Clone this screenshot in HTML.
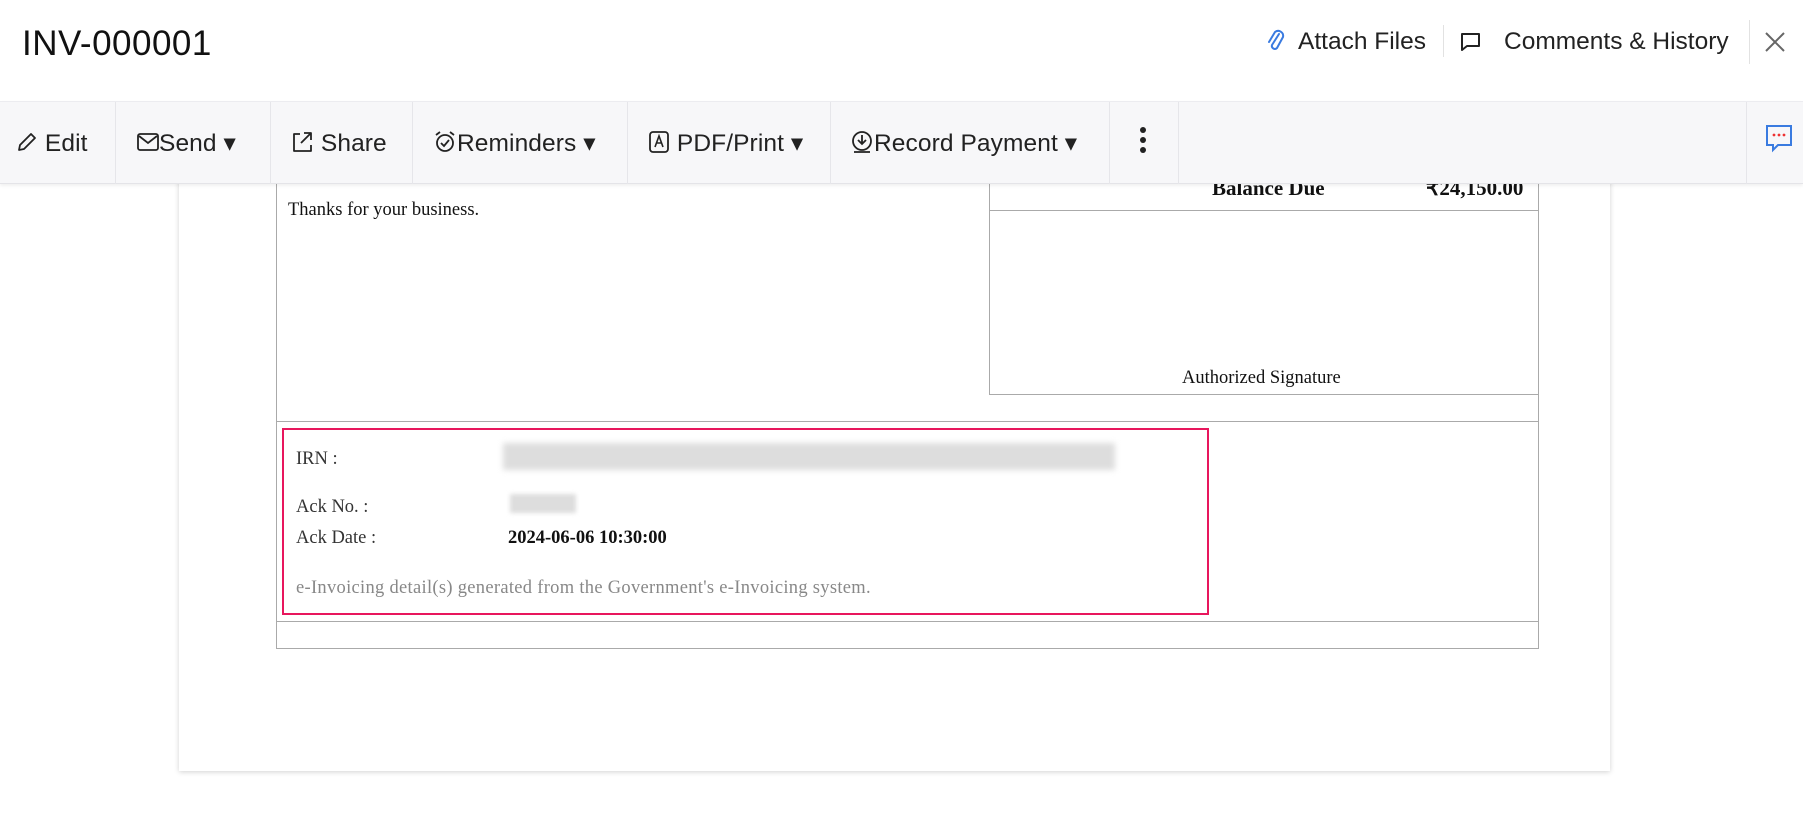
<!DOCTYPE html>
<html><head><meta charset="utf-8"><style>
*{margin:0;padding:0;box-sizing:border-box}
body{width:1803px;height:826px;background:#fff;position:relative;overflow:hidden;font-family:"Liberation Sans",sans-serif;color:#222}
.abs{position:absolute}
.tb{position:absolute;top:101px;left:0;width:1803px;height:83px;background:#f7f7f9;border-top:1px solid #ececf0;border-bottom:1px solid #e4e4e8;box-shadow:0 2px 3px rgba(0,0,0,.06);z-index:5}
.tb .sep{position:absolute;top:0;width:1px;height:82px;background:#e6e6ea}
.tb .it{position:absolute;top:1px;height:82px;line-height:82px;font-size:24.5px;color:#222;white-space:nowrap;letter-spacing:.1px}
.tb svg{vertical-align:middle;margin-top:-6px}
.serif{font-family:"Liberation Serif",serif;font-size:18.5px}
</style></head><body>
<div class="abs" style="left:22px;top:24px;font-size:35px;color:#111;letter-spacing:.5px">INV-000001</div>
<svg class="abs" style="left:1266px;top:28px" width="20" height="26" viewBox="0 0 20 26"><path d="M13 6 L6 17 a3 3 0 0 0 5 3 L17 9 a5 5 0 0 0 -8 -5 L3 14" fill="none" stroke="#3a7be0" stroke-width="2" stroke-linecap="round"/></svg>
<div class="abs" style="left:1298px;top:28px;font-size:24.5px;color:#222">Attach Files</div>
<div class="abs" style="left:1443px;top:25px;width:1px;height:32px;background:#e2e2e2"></div>
<svg class="abs" style="left:1459px;top:30px" width="24" height="24" viewBox="0 0 24 24"><path d="M3 4h17v12H8l-5 4z" fill="none" stroke="#222" stroke-width="2" stroke-linejoin="round"/></svg>
<div class="abs" style="left:1504px;top:28px;font-size:24.5px;color:#222">Comments &amp; History</div>
<div class="abs" style="left:1749px;top:20px;width:1px;height:44px;background:#e2e2e2"></div>
<svg class="abs" style="left:1764px;top:31px" width="22" height="22" viewBox="0 0 22 22"><path d="M2 2L20 20M20 2L2 20" stroke="#666" stroke-width="2"/></svg>

<div class="tb">
<div class="it" style="left:16px"><svg width="22" height="22" viewBox="0 0 22 22"><path d="M3 19l1-5L15 3l4 4L8 18z" fill="none" stroke="#222" stroke-width="1.8" stroke-linejoin="round"/></svg> Edit</div>
<div class="sep" style="left:115px"></div>
<div class="it" style="left:137px"><svg width="22" height="20" viewBox="0 0 22 20"><rect x="1" y="2" width="20" height="16" rx="2" fill="none" stroke="#222" stroke-width="1.8"/><path d="M2 4l9 7 9-7" fill="none" stroke="#222" stroke-width="1.8"/></svg>Send ▾</div>
<div class="sep" style="left:270px"></div>
<div class="it" style="left:290px"><svg width="24" height="24" viewBox="0 0 24 24"><path d="M10 4H4v17h17v-6M14 3h7v7M21 3l-10 10" fill="none" stroke="#222" stroke-width="1.8" stroke-linejoin="round"/></svg> Share</div>
<div class="sep" style="left:412px"></div>
<div class="it" style="left:433px"><svg width="24" height="24" viewBox="0 0 24 24"><circle cx="12" cy="13" r="8" fill="none" stroke="#222" stroke-width="1.8"/><path d="M8 13l3 3 5-6M3 5l4-3M21 5l-4-3" fill="none" stroke="#222" stroke-width="1.8"/></svg>Reminders ▾</div>
<div class="sep" style="left:627px"></div>
<div class="it" style="left:648px"><svg width="22" height="24" viewBox="0 0 22 24"><rect x="2" y="2" width="18" height="20" rx="3" fill="none" stroke="#222" stroke-width="1.8"/><path d="M7 17l4-11 4 11M8.5 13h5" fill="none" stroke="#222" stroke-width="1.6"/></svg> PDF/Print ▾</div>
<div class="sep" style="left:830px"></div>
<div class="it" style="left:850px"><svg width="24" height="24" viewBox="0 0 24 24"><circle cx="12" cy="11" r="9" fill="none" stroke="#222" stroke-width="1.8"/><path d="M12 5v9M8 10l4 4 4-4M4 22h16" fill="none" stroke="#222" stroke-width="1.8"/></svg>Record Payment ▾</div>
<div class="sep" style="left:1109px"></div>
<svg class="abs" style="left:1139px;top:30px" width="8" height="28" viewBox="0 0 8 28"><circle cx="4" cy="4" r="3" fill="#222"/><circle cx="4" cy="14" r="3" fill="#222"/><circle cx="4" cy="24" r="3" fill="#222"/></svg>
<div class="sep" style="left:1178px"></div>
<div class="sep" style="left:1746px"></div>
<svg class="abs" style="left:1764px;top:27px" width="30" height="30" viewBox="0 0 30 30"><path d="M3 3h24v19H14l-5 5v-5H3z" fill="none" stroke="#3a7be0" stroke-width="2"/><circle cx="10" cy="12" r="1.4" fill="#e33"/><circle cx="15" cy="12" r="1.4" fill="#e33"/><circle cx="20" cy="12" r="1.4" fill="#e33"/></svg>
</div>

<div class="abs" style="left:179px;top:150px;width:1431px;height:621px;background:#fff;box-shadow:0 1px 5px rgba(0,0,0,.18)"></div>
<div class="abs" style="left:276px;top:150px;width:1263px;height:499px;border:1px solid #aaa;border-top:none"></div>
<div class="abs" style="left:276px;top:421px;width:1263px;height:1px;background:#aaa"></div>
<div class="abs" style="left:276px;top:621px;width:1263px;height:1px;background:#aaa"></div>
<div class="abs" style="left:989px;top:150px;width:550px;height:245px;border-left:1px solid #aaa;border-bottom:1px solid #aaa"></div>
<div class="abs" style="left:989px;top:210px;width:550px;height:1px;background:#aaa"></div>
<div class="abs serif" style="left:1212px;top:176px;font-size:21px;font-weight:bold;color:#111">Balance Due</div>
<div class="abs serif" style="left:1426px;top:176px;font-size:21px;font-weight:bold;color:#111">₹24,150.00</div>
<div class="abs serif" style="left:288px;top:200px;color:#111">Thanks for your business.</div>
<div class="abs serif" style="left:1182px;top:368px;color:#111">Authorized Signature</div>

<div class="abs" style="left:282px;top:428px;width:927px;height:187px;border:2.5px solid #e8175d"></div>
<div class="abs serif" style="left:296px;top:449px;color:#333">IRN :</div>
<div class="abs" style="left:503px;top:443px;width:612px;height:27px;background:#ddd;filter:blur(3px)"></div>
<div class="abs serif" style="left:296px;top:497px;color:#333">Ack No. :</div>
<div class="abs" style="left:510px;top:494px;width:66px;height:19px;background:#ddd;filter:blur(2px)"></div>
<div class="abs serif" style="left:296px;top:528px;color:#333">Ack Date :</div>
<div class="abs serif" style="left:508px;top:528px;font-weight:bold;color:#111">2024-06-06 10:30:00</div>
<div class="abs serif" style="left:296px;top:578px;color:#888;letter-spacing:.3px">e-Invoicing detail(s) generated from the Government's e-Invoicing system.</div>
</body></html>
